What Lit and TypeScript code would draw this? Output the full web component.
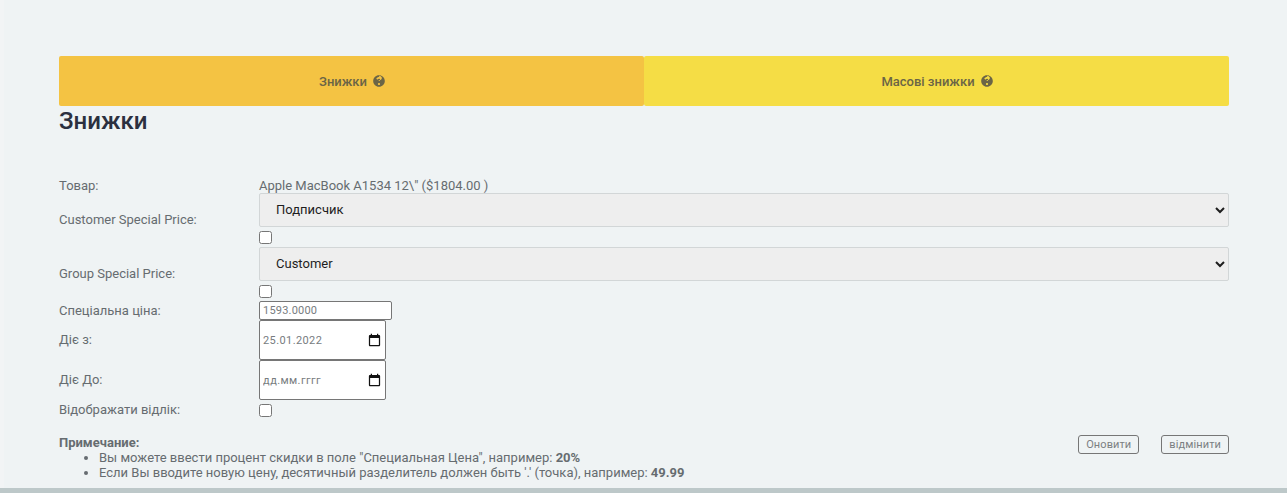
import { LitElement, html, css } from "lit";
import { customElement } from "lit/decorators.js";

const help = html`<svg class="help" viewBox="0 0 512 512" aria-hidden="true"><path fill="currentColor" d="M504 256c0 137-111 248-248 248S8 393 8 256C8 119 119 8 256 8s248 111 248 248zM262.700 90c-54.500 0-89.300 23-116.500 63.800-3.500 5.300-2.400 12.400 2.700 16.300l34.700 26.300c5.200 3.900 12.600 3 16.700-2.100 17.900-22.700 30.100-35.800 57.300-35.800 20.400 0 45.700 13.100 45.700 33 0 15-12.400 22.700-32.600 34-23.600 13.200-54.800 29.700-54.800 70.900V240c0 6.600 5.400 12 12 12h56c6.600 0 12-5.400 12-12v-1.300c0-28.600 83.500-29.800 83.500-107.200 0-58.300-60.500-102.500-116.700-102.500zM256 338c-25.500 0-46.200 20.700-46.200 46.200 0 25.500 20.700 46.200 46.200 46.200s46.200-20.700 46.200-46.200c0-25.500-20.700-46.200-46.200-46.200z"/></svg>`;

const calendar = html`<svg class="cal" viewBox="0 0 24 24" aria-hidden="true"><path fill="#111" d="M19 3h-1V1h-2v2H8V1H6v2H5c-1.110 0-2 .9-2 2v14c0 1.100.89 2 2 2h14c1.100 0 2-.9 2-2V5c0-1.100-.9-2-2-2zm0 16H5V8h14v11z"/></svg>`;

@customElement("app-root")
export class AppRoot extends LitElement {
  static styles = css`
    :host {
      display: block;
      height: 493px;
      overflow: hidden;
      background: #eff3f4;
      font-family: Roboto, "Liberation Sans", sans-serif;
      font-size: 13px;
      color: #666c70;
    }
    .page {
      box-sizing: border-box;
      height: 488px;
      padding: 56px 58px 0 55px;
      border-left: 4px solid #f2f4f5;
      display: flex;
      flex-direction: column;
    }
    .strip {
      height: 5px;
      background: #bdc8c9;
    }
    .tabs {
      display: grid;
      grid-template-columns: 1fr 1fr;
      height: 50px;
    }
    .tab {
      display: flex;
      align-items: center;
      justify-content: center;
      gap: 6px;
      padding-left: 1px;
      border-radius: 2px;
      font-weight: 500;
      font-size: 13px;
      color: #6b6546;
    }
    .tab.active { background: #f4c343; }
    .tab.other { background: #f5dd45; }
    .help { width: 12px; height: 12px; }
    h1 {
      margin: 0;
      font-size: 24px;
      line-height: 30px;
      font-weight: 500;
      color: #2b3040;
      height: 72px;
    }
    .form {
      display: grid;
      grid-template-columns: 200px 1fr;
      align-items: center;
    }
    .up { padding-bottom: 2px; }
    .value { line-height: 15px; height: 15px; }
    .stack { display: flex; flex-direction: column; align-items: flex-start; }
    select {
      box-sizing: border-box;
      display: block;
      width: 100%;
      height: 34px;
      padding: 0 8px 2px 12px;
      background-color: #eeeeee;
      border: 1px solid #d2d6d7;
      border-radius: 2px;
      font: 13px Roboto, sans-serif;
      color: #1e1e1e;
    }
    .check {
      display: block;
      width: 13px;
      height: 13px;
      margin: 4px 0 3px;
    }
    .text {
      box-sizing: border-box;
      display: block;
      width: 133px;
      height: 19px;
      padding: 0 3px;
      font: 11px Roboto, sans-serif;
      letter-spacing: 0.2px;
      color: #777c80;
      border: 1px solid #767676;
      border-radius: 2px;
      background: #fff;
    }
    .date {
      box-sizing: border-box;
      display: flex;
      align-items: center;
      width: 127px;
      height: 40px;
      padding: 0 3px;
      border: 1px solid #767676;
      border-radius: 2px;
      background: #fff;
    }
    .date input {
      flex: 1;
      min-width: 0;
      padding: 0;
      border: 0;
      outline: 0;
      background: transparent;
      font: 11px Roboto, sans-serif;
      letter-spacing: 0.4px;
      color: #777c80;
    }
    .date input::placeholder { color: #777c80; opacity: 1; }
    .cal { width: 15px; height: 15px; flex: none; }
    .foot {
      display: flex;
      justify-content: space-between;
      align-items: flex-start;
      margin-top: 15px;
      line-height: 15px;
    }
    ul { margin: 0; padding: 0 0 0 40px; }
    b { font-weight: 700; }
    .actions { display: flex; gap: 22px; }
    button {
      box-sizing: border-box;
      height: 19px;
      padding: 0 7px;
      font: 11px Roboto, sans-serif;
      letter-spacing: 0.1px;
      color: #7b7f82;
      background: transparent;
      border: 1px solid #767676;
      border-radius: 3px;
    }
  `;

  render() {
    return html`
      <div class="page">
        <div class="tabs">
          <div class="tab active"><span>Знижки</span>${help}</div>
          <div class="tab other"><span>Масові знижки</span>${help}</div>
        </div>
        <h1>Знижки</h1>
        <div class="form">
          <div>Товар:</div>
          <div class="value">Apple MacBook A1534 12\\" ($1804.00 )</div>

          <div class="up">Customer Special Price:</div>
          <div class="stack">
            <select><option>Подписчик</option></select>
            <input class="check" type="checkbox" />
          </div>

          <div class="up">Group Special Price:</div>
          <div class="stack">
            <select><option>Customer</option></select>
            <input class="check" type="checkbox" />
          </div>

          <div>Спеціальна ціна:</div>
          <input class="text" type="text" .value=${"1593.0000"} />

          <div class="up">Діє з:</div>
          <label class="date"><input type="text" .value=${"25.01.2022"} />${calendar}</label>

          <div class="up">Діє До:</div>
          <label class="date"><input type="text" placeholder="дд.мм.гггг" />${calendar}</label>

          <div class="up">Відображати відлік:</div>
          <input class="check" type="checkbox" />
        </div>
        <div class="foot">
          <div>
            <b>Примечание:</b>
            <ul>
              <li>Вы можете ввести процент скидки в поле "Специальная Цена", например: <b>20%</b></li>
              <li>Если Вы вводите новую цену, десятичный разделитель должен быть '.' (точка), например: <b>49.99</b></li>
            </ul>
          </div>
          <div class="actions">
            <button>Оновити</button>
            <button>відмінити</button>
          </div>
        </div>
      </div>
      <div class="strip"></div>
    `;
  }
}
